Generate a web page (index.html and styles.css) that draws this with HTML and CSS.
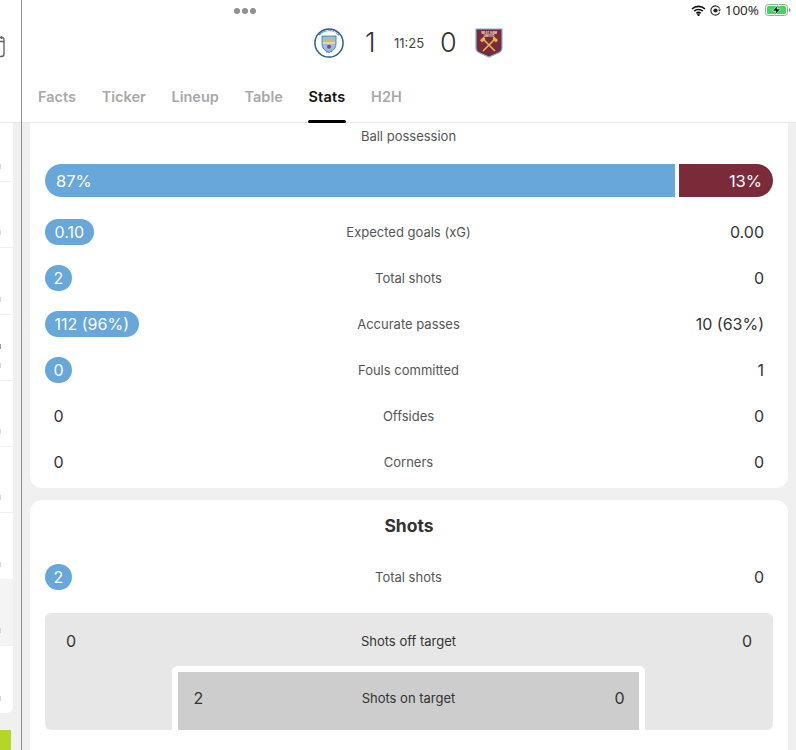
FILE: index.html
```html
<!DOCTYPE html>
<html lang="en">
<head>
<meta charset="utf-8">
<title>Match stats</title>
<link rel="stylesheet" href="styles.css">
</head>
<body>
<div class="app">
  <aside class="side">
    <div class="side-head">
      <svg class="cal" width="5" height="22" viewBox="0 0 5 22"><path d="M-4 1.500H1.500Q4 1.500 4 4V18Q4 20.500 1.500 20.500H-4" fill="none" stroke="#666" stroke-width="1.400"/><path d="M-4 5.500H4M1.500 0V3" stroke="#666" stroke-width="1.400"/></svg>
    </div>
    <div class="side-list">
      <div class="side-row"><i></i></div>
      <div class="side-row"><i></i></div>
      <div class="side-row"><i></i></div>
      <div class="side-row extra"><i></i></div>
      <div class="side-row"><i></i></div>
      <div class="side-row"><i></i></div>
      <div class="side-row"><i></i></div>
      <div class="side-row hl"><i></i></div>
      <div class="side-row last"><i></i></div>
    </div>
    <div class="side-ad"></div>
  </aside>
  <main class="main">
    <header class="head">
      <div class="dots"><b></b><b></b><b></b></div>
      <div class="status">
        <svg width="15" height="11" viewBox="0 0 15 11"><path d="M1 4a9.500 9.500 0 0 1 13 0M3.200 6.200a6.300 6.300 0 0 1 8.600 0M5.400 8.300a3.200 3.200 0 0 1 4.200 0" fill="none" stroke="#111" stroke-width="1.700"/><circle cx="7.500" cy="9.800" r="1.200" fill="#111"/></svg>
        <svg width="11" height="11" viewBox="0 0 11 11"><path d="M9.600 7.500A4.600 4.600 0 1 1 9.600 3.500" fill="none" stroke="#222" stroke-width="1.100"/><circle cx="5.500" cy="5.500" r="2.100" fill="#222"/><path d="M8 4.500h3L9.500 6.500z" fill="#222"/></svg>
        <span class="pct">100%</span>
        <svg width="26" height="12" viewBox="0 0 26 12"><rect x=".5" y=".5" width="22" height="11" rx="3" fill="#fff" stroke="#8fae8f"/><rect x="2" y="2" width="19" height="8" rx="1.500" fill="#45d35f"/><path d="M24 4v4q1.500-.5 1.500-2T24 4z" fill="#8a8a8a"/><path d="M13.500 0.500 7.500 7H11L9.500 11.500 15.500 5H12z" fill="#111" stroke="#fff" stroke-width=".6"/></svg>
      </div>
      <div class="score">
        <svg class="crest" width="30" height="30" viewBox="0 0 32 32">
          <defs><path id="ring" d="M3.500 16a12.500 12.500 0 0 1 25 0"/><path id="ringb" d="M6 20a11 11 0 0 0 20 0"/></defs>
          <circle cx="16" cy="16" r="15" fill="#fff" stroke="#2a5f97" stroke-width="1.600"/>
          <text class="crest-t"><textPath href="#ring" startOffset="50%" text-anchor="middle">MANCHESTER</textPath></text>
          <text class="crest-t"><textPath href="#ringb" startOffset="50%" text-anchor="middle">CITY</textPath></text>
          <path d="M8.500 8.500H23.500V17Q23.500 23.500 16 26 8.500 23.500 8.500 17Z" fill="#8fc0e6" stroke="#2a5f97" stroke-width=".7"/>
          <path d="M10.500 15V12L12.500 14 14 10.500 16 13.500 18 10.500 19.500 14 21.500 12V15Z" fill="#e6b84c"/>
          <path d="M9.500 15H22.500V17H9.500Z" fill="#f1d98a"/>
          <circle cx="16" cy="20" r="2.200" fill="#c0353f"/>
        </svg>
        <span class="goal g1">1</span>
        <span class="clock">11:25</span>
        <span class="goal g2">0</span>
        <svg class="crest2" width="28" height="30" viewBox="0 0 28 30">
          <path d="M1 1H27V20Q27 24 22 25.500L14 29 6 25.500Q1 24 1 20Z" fill="#7a2a3a" stroke="#7fb4de" stroke-width="1.200"/>
          <text class="crest-w" x="14" y="5.500">WEST HAM</text>
          <text class="crest-w" x="14" y="8.500">UNITED</text>
          <path d="M8 11 20 23M20 11 8 23" stroke="#e6b84c" stroke-width="1.600"/>
          <path d="M5 12 9 8.500 10.500 11 7 14.500ZM23 12 19 8.500 17.500 11 21 14.500Z" fill="#e6b84c"/>
        </svg>
      </div>
      <nav class="tabs">
        <span class="tab">Facts</span>
        <span class="tab">Ticker</span>
        <span class="tab">Lineup</span>
        <span class="tab">Table</span>
        <span class="tab on">Stats</span>
        <span class="tab">H2H</span>
      </nav>
    </header>
    <div class="scroll">
      <section class="card c1">
        <div class="poss-label">Ball possession</div>
        <div class="bar">
          <div class="bar-h" style="width:630px">87%</div>
          <div class="bar-a">13%</div>
        </div>
        <div class="row"><span class="side-l"><em class="pill">0.10</em></span><span class="lab">Expected goals (xG)</span><span class="val">0.00</span></div>
        <div class="row"><span class="side-l"><em class="pill round">2</em></span><span class="lab">Total shots</span><span class="val">0</span></div>
        <div class="row"><span class="side-l"><em class="pill">112 (96%)</em></span><span class="lab">Accurate passes</span><span class="val">10 (63%)</span></div>
        <div class="row"><span class="side-l"><em class="pill round">0</em></span><span class="lab">Fouls committed</span><span class="val">1</span></div>
        <div class="row"><span class="side-l"><em class="plain">0</em></span><span class="lab">Offsides</span><span class="val">0</span></div>
        <div class="row"><span class="side-l"><em class="plain">0</em></span><span class="lab">Corners</span><span class="val">0</span></div>
      </section>
      <section class="card c2">
        <h2 class="title">Shots</h2>
        <div class="row"><span class="side-l"><em class="pill round">2</em></span><span class="lab">Total shots</span><span class="val">0</span></div>
        <div class="goalbox">
          <div class="gb-row"><span class="gb-n">0</span><span class="lab dark">Shots off target</span><span class="gb-n">0</span></div>
          <div class="goalframe">
            <div class="gb-in"><span class="gb-n">2</span><span class="lab dark">Shots on target</span><span class="gb-n">0</span></div>
          </div>
        </div>
      </section>
    </div>
  </main>
</div>
</body>
</html>
```
FILE: styles.css
```css
* { box-sizing: border-box; }
html, body { margin: 0; padding: 0; height: 750px; overflow: hidden; background: #f0f0f0; }
body { font-family: Inter, "Liberation Sans", sans-serif; color: #333; }
.app { display: flex; width: 796px; height: 750px; }

.side { width: 21px; flex: none; display: flex; flex-direction: column; background: #f0f0f0; }
.side-head { height: 123px; background: #fff; padding-top: 36px; border-bottom: 1px solid #e8e8e8; }
.cal { display: block; }
.side-list { width: 13px; background: #fff; border-radius: 0 0 7px 0; overflow: hidden; }
.side-row { height: 66.300px; border-bottom: 1px solid #f1f1f1; display: flex; align-items: flex-end; padding-bottom: 12px; }
.side-row:first-child { height: 59px; }
.side-row.last { height: 67px; border-bottom: 0; }
.side-row.hl { background: #f4f4f4; }
.side-row i { width: 1px; height: 5px; background: #d8d8d8; }
.side-row.extra i { box-shadow: 0 -19px 0 #999; }
.side-ad { width: 11px; height: 20px; margin-top: 17px; background: #b4d727; }

.main { width: 775px; flex: none; border-left: 1px solid #8e8e8e; display: flex; flex-direction: column; }
.head { position: relative; height: 123px; flex: none; background: #fff; border-bottom: 1px solid #e8e8e8; display: flex; flex-direction: column; }
.dots { position: absolute; left: 212px; top: 8px; display: flex; gap: 2px; }
.dots b { width: 6px; height: 6px; border-radius: 50%; background: #8f8f8f; }
.status { position: absolute; right: 5px; top: 4px; display: flex; align-items: center; gap: 4px; height: 12px; }
.pct { font-size: 13.500px; color: #222; font-family: "Open Sans", Inter, sans-serif; margin: 0 2px 0 0; }

.score { height: 62px; padding-top: 24px; display: flex; align-items: center; position: relative; }
.crest { margin-left: 292px; flex: none; }
.crest-t { font-size: 3.200px; font-weight: 700; fill: #2a5f97; font-family: Inter, sans-serif; }
.crest-w { font-size: 2.800px; font-weight: 700; fill: #f5ead0; text-anchor: middle; font-family: Inter, sans-serif; }
.goal { font-size: 27px; font-weight: 300; color: #333; line-height: 32px; }
.g1 { margin-left: 21px; width: 15px; }
.clock { margin-left: 6px; width: 46px; text-align: center; font-size: 13px; color: #444; }
.g2 { margin-left: 8px; width: 18px; }
.crest2 { margin-left: 17px; flex: none; }

.tabs { display: flex; gap: 25.700px; padding: 26px 0 0 16px; }
.tab { position: relative; font-size: 14.500px; font-weight: 600; color: #a8a8a8; line-height: 20px; height: 35px; }
.tab.on { color: #111; letter-spacing: .2px; }
.tab.on::after { content: ""; position: absolute; left: 0; right: -1px; bottom: -1px; height: 3px; border-radius: 2px; background: #000; }

.scroll { flex: 1; padding: 0 8px; display: flex; flex-direction: column; gap: 12px; min-height: 0; overflow: hidden; }
.card { background: #fff; padding: 0 15px; flex: none; }
.c1 { height: 365px; border-radius: 0 0 12px 12px; }
.c2 { border-radius: 12px 12px 0 0; flex: 1; }

.poss-label { height: 41px; padding: 4px 1px 0 0; font-size: 13px; line-height: 18px; text-align: center; color: #555; }
.bar { display: flex; gap: 4px; height: 33px; margin-bottom: 12px; font-size: 16.500px; line-height: 34px; color: #fff; }
.bar-h { background: #68a7da; border-radius: 16.500px 0 0 16.500px; padding-left: 11px; flex: none; }
.bar-a { flex: 1; background: #7b2a3a; border-radius: 0 16.500px 16.500px 0; padding-right: 11px; text-align: right; }

.row { height: 46px; display: grid; grid-template-columns: 1fr auto 1fr; align-items: center; }
.side-l { display: flex; }
.lab { font-size: 13px; color: #555; text-align: center; line-height: 18px; margin-right: 1px; }
.lab.dark { color: #333; }
.val { text-align: right; padding-right: 9px; font-size: 16px; color: #333; }
.pill { font-style: normal; height: 26px; line-height: 26px; border-radius: 13px; padding: 0 9.500px; background: #68a7da; color: #fff; font-size: 16px; }
.pill.round { width: 27px; padding: 0; text-align: center; }
.plain { font-style: normal; width: 27px; text-align: center; font-size: 16px; color: #333; }

.title { margin: 0; height: 54px; padding-top: 15px; font-size: 17.500px; line-height: 22px; font-weight: 700; text-align: center; color: #333; }
.goalbox { margin-top: 13px; height: 117px; background: #e7e7e7; border-radius: 6px; display: flex; flex-direction: column; align-items: center; }
.gb-row { width: 100%; height: 53px; padding: 3px 21px 0; display: flex; justify-content: space-between; align-items: center; }
.gb-n { font-size: 16px; color: #333; width: 10px; text-align: center; }
.goalframe { width: 473px; height: 64px; margin-right: 2px; border: 6px solid #fff; border-bottom: 0; border-radius: 6px 6px 0 0; background: #cdcdcd; }
.gb-in { height: 52px; padding: 0 14px 0 16px; display: flex; justify-content: space-between; align-items: center; }
```
